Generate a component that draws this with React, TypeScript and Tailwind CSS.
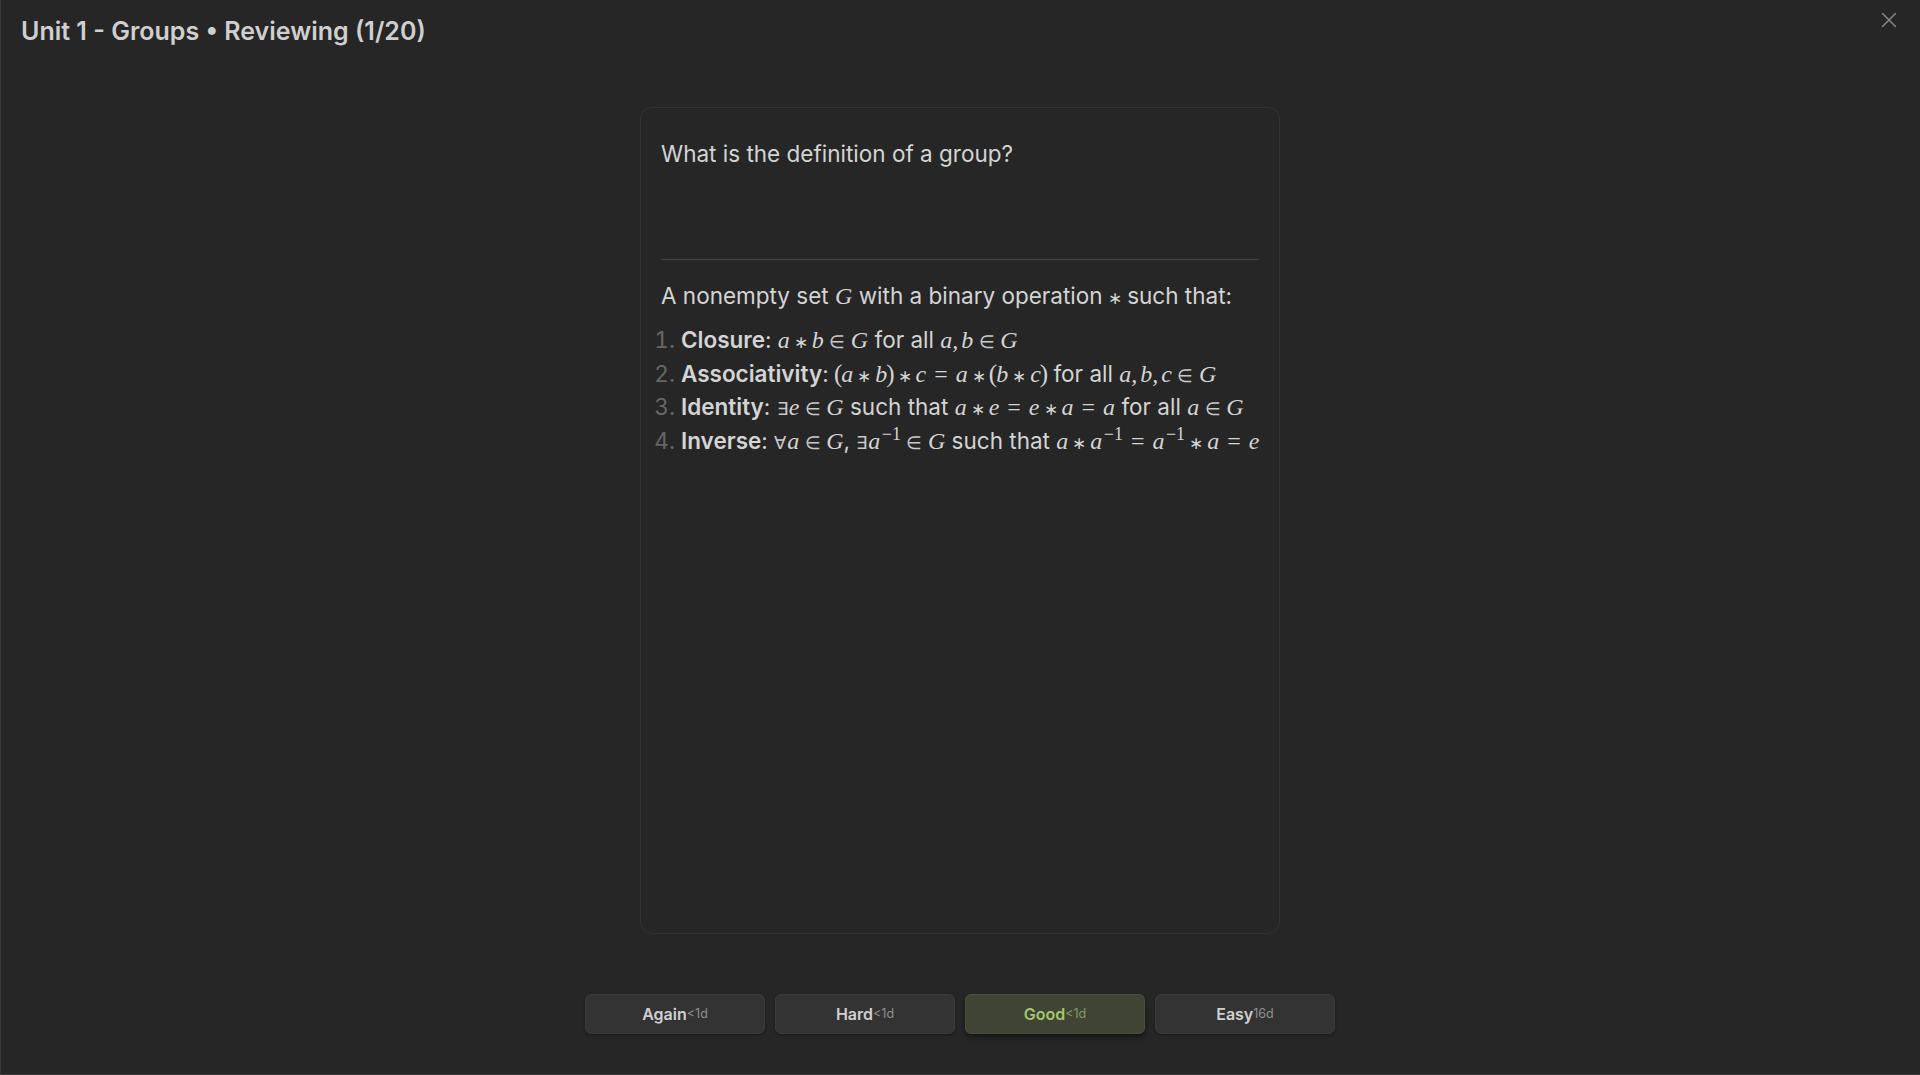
import { X } from "lucide-react";
import type { ReactNode } from "react";

// variables
function M({ children }: { children: ReactNode }) {
  return <span className="font-['Liberation_Serif',serif] italic text-[24px] leading-none text-[#d4d4d4]">{children}</span>;
}

// binary op
function Bin({ children }: { children: ReactNode }) {
  return <span className="font-['Liberation_Serif',serif] text-[17px] leading-none mx-[4px] text-[#d4d4d4]">{children}</span>;
}

// = sign
function Eq() {
  return <span className="font-['Liberation_Serif',serif] text-[24px] leading-none mx-[8px] text-[#d4d4d4]">=</span>;
}

// element-of is wider in the fallback font, so smaller
function In() {
  return <span className="font-['Liberation_Serif',serif] text-[18px] leading-none mx-[5.5px] text-[#c8c8c8]">∈</span>;
}

function Q({ children }: { children: ReactNode }) {
  return <span className="font-['Liberation_Serif',serif] text-[18px] leading-none mr-[1px] text-[#c8c8c8]">{children}</span>;
}

function P({ children }: { children: ReactNode }) {
  return <span className="font-['Liberation_Serif',serif] text-[25px] leading-none -mx-px text-[#d4d4d4]">{children}</span>;
}

function Sup({ children }: { children: ReactNode }) {
  return <sup className="font-['Liberation_Serif',serif] text-[18px] leading-none ml-[1.5px]">{children}</sup>;
}

// thin gap after a comma inside a formula
function Gap() {
  return <span className="ml-[3px]" />;
}

const answers = [
  { label: "Again", hint: "<1d" },
  { label: "Hard", hint: "<1d" },
  { label: "Good", hint: "<1d", active: true },
  { label: "Easy", hint: "16d" },
];

export default function App() {
  return (
    <div className="h-[1075px] w-full flex flex-col bg-[#262626] border-b border-[#3a3a3a] shadow-[inset_1px_0_0_#3a3a3a] text-[#d4d4d4] font-['Inter',sans-serif] overflow-hidden">
      <div className="flex items-start justify-between h-[107px] pl-[21px] pr-[18px]">
        <h1 className="mt-[15px] text-[25px] leading-[32px] font-semibold text-[#cfcfcf]">Unit 1 - Groups • Reviewing (1/20)</h1>
        <X className="mt-[7px] w-[26px] h-[26px] text-[#8a8a8a]" strokeWidth={1.3} />
      </div>

      <div className="flex justify-center">
        <div className="w-[640px] h-[827px] border border-[#333333] rounded-xl px-5 py-[21px] text-[22.5px] leading-[33.6px]">
          <p className="mt-[8px]">What is the definition of a group?</p>
          <hr className="mt-[88px] border-[#444444]" />
          <p className="mt-[19px]">
            A nonempty set <M>G</M> with a binary operation <span className="font-['Liberation_Serif',serif] text-[17px] leading-none -mx-[1px]">∗</span> such that:
          </p>
          <ol className="mt-[11px] pl-5 list-decimal marker:text-[#666666] whitespace-nowrap">
            <li>
              <b className="font-semibold">Closure</b>: <M>a</M><Bin>∗</Bin><M>b</M><In /><M>G</M> for all <M>a,<Gap />b</M><In /><M>G</M>
            </li>
            <li>
              <b className="font-semibold">Associativity</b>: <P>(</P><M>a</M><Bin>∗</Bin><M>b</M><P>)</P><Bin>∗</Bin><M>c</M><Eq /><M>a</M><Bin>∗</Bin><P>(</P><M>b</M><Bin>∗</Bin><M>c</M><P>)</P> for all <M>a,<Gap />b,<Gap />c</M><In /><M>G</M>
            </li>
            <li>
              <b className="font-semibold">Identity</b>: <Q>∃</Q><M>e</M><In /><M>G</M> such that <M>a</M><Bin>∗</Bin><M>e</M><Eq /><M>e</M><Bin>∗</Bin><M>a</M><Eq /><M>a</M> for all <M>a</M><In /><M>G</M>
            </li>
            <li>
              <b className="font-semibold">Inverse</b>: <Q>∀</Q><M>a</M><In /><M>G</M>, <Q>∃</Q><M>a</M><Sup>−1</Sup><In /><M>G</M> such that <M>a</M><Bin>∗</Bin><M>a</M><Sup>−1</Sup><Eq /><M>a</M><Sup>−1</Sup><Bin>∗</Bin><M>a</M><Eq /><M>e</M>
            </li>
          </ol>
        </div>
      </div>

      <div className="flex justify-center gap-[10px] mt-[60px]">
        {answers.map((a) => (
          <button
            key={a.label}
            className={
              a.active
                ? "w-[180px] h-[40px] flex items-center justify-center rounded-[6px] border border-[#4a4f3c] bg-[#3f4434] shadow-md shadow-black/40 text-[#a6c46d]"
                : "w-[180px] h-[40px] flex items-center justify-center rounded-[6px] border border-[#3b3b3b] bg-[#333333] shadow-sm shadow-black/30 text-[#d0d0d0]"
            }
          >
            <span className="text-[16px] font-semibold">{a.label}</span>
            <span className={a.active ? "text-[12.5px] text-[#87986a]" : "text-[12.5px] text-[#8f8f8f]"}>{a.hint}</span>
          </button>
        ))}
      </div>
    </div>
  );
}
